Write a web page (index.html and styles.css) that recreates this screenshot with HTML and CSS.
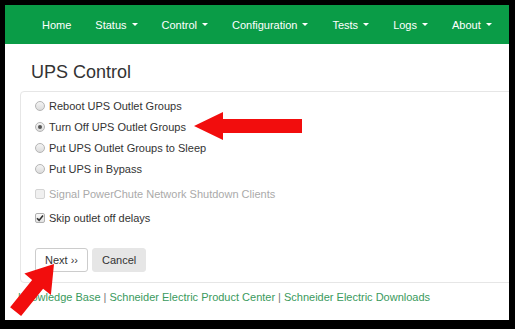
FILE: index.html
```html
<!DOCTYPE html>
<html lang="en">
<head>
  <meta charset="UTF-8" />
  <meta name="viewport" content="width=device-width, initial-scale=1.0"/>
  <title>UPS Control</title>
  <link rel="stylesheet" href="styles.css">
</head>
<body>
  <div class="screen">
    <nav class="navbar">
      <a class="nav-link">Home</a>
      <a class="nav-link">Status<span class="caret"></span></a>
      <a class="nav-link">Control<span class="caret"></span></a>
      <a class="nav-link">Configuration<span class="caret"></span></a>
      <a class="nav-link">Tests<span class="caret"></span></a>
      <a class="nav-link">Logs<span class="caret"></span></a>
      <a class="nav-link">About<span class="caret"></span></a>
    </nav>
    <h1 class="page-title">UPS Control</h1>
    <div class="panel">
      <div class="option"><span class="radio"></span>Reboot UPS Outlet Groups</div>
      <div class="option"><span class="radio on"></span>Turn Off UPS Outlet Groups</div>
      <div class="option"><span class="radio"></span>Put UPS Outlet Groups to Sleep</div>
      <div class="option"><span class="radio"></span>Put UPS in Bypass</div>
      <div class="option check first disabled"><span class="box"></span>Signal PowerChute Network Shutdown Clients</div>
      <div class="option check"><span class="box">
        <svg width="8" height="8" viewBox="0 0 8 8"><path d="M1 4.2 L3.1 6.4 L7 1.4" fill="none" stroke="#333" stroke-width="1.6"/></svg>
      </span>Skip outlet off delays</div>
      <div class="buttons">
        <button class="btn btn-next">Next &rsaquo;&rsaquo;</button>
        <button class="btn btn-cancel">Cancel</button>
      </div>
    </div>
    <div class="footer">
      <a>Knowledge Base</a><span class="sep">|</span><a>Schneider Electric Product Center</a><span class="sep">|</span><a>Schneider Electric Downloads</a>
    </div>
  </div>
  <svg class="arrows" width="515" height="329" viewBox="0 0 515 329">
    <polygon points="194,126 223,112 223,119 302,119 302,133 223,133 223,140" fill="#f20d0d"/>
    <polygon points="54,264 24.4,273.6 32.1,279.9 10.1,307.2 21.1,316 43.1,288.7 50.9,295" fill="#f20d0d"/>
  </svg>
</body>
</html>
```

FILE: styles.css
```css
html, body {
  margin: 0;
  padding: 0;
}
body {
  position: relative;
  width: 515px;
  height: 329px;
  background-color: #000;
  font-family: "Liberation Sans", Arial, sans-serif;
  font-size: 11px;
  color: #333;
  overflow: hidden;
}
.screen {
  margin: 5px 0 0 5px;
  width: 504px;
  height: 315px;
  background-color: #fff;
  overflow: hidden;
}
.navbar {
  display: flex;
  align-items: center;
  height: 39px;
  padding-left: 25px;
  background-color: #0a9c47;
}
.nav-link {
  display: flex;
  align-items: center;
  padding: 0 12px;
  color: #fff;
  white-space: nowrap;
}
.caret {
  margin-left: 5px;
  border-top: 3px solid #fff;
  border-left: 3px solid transparent;
  border-right: 3px solid transparent;
}
.page-title {
  margin: 17px 0 0 26px;
  font-size: 18px;
  font-weight: normal;
  line-height: 22px;
  color: #333;
}
.panel {
  width: 520px;
  margin: 8px 0 0 15px;
  padding: 3px 0 10px 14px;
  border: 1px solid #e6e6e6;
  border-radius: 4px;
}
.option {
  display: flex;
  align-items: center;
  height: 21px;
}
.check {
  margin-top: 3px;
}
.check.first {
  margin-top: 4px;
}
.disabled {
  color: #aaa;
}
.radio {
  box-sizing: border-box;
  display: flex;
  align-items: center;
  justify-content: center;
  width: 10px;
  height: 10px;
  margin-right: 4px;
  border: 1px solid #b4b4b4;
  border-radius: 50%;
  background: linear-gradient(#f4f4f4, #dcdcdc);
}
.radio.on::after {
  content: "";
  width: 4px;
  height: 4px;
  border-radius: 50%;
  background-color: #555;
}
.box {
  box-sizing: border-box;
  display: flex;
  align-items: center;
  justify-content: center;
  width: 10px;
  height: 10px;
  margin-right: 4px;
  border: 1px solid #b0b0b0;
  border-radius: 2px;
  background: linear-gradient(#fafafa, #e2e2e2);
}
.disabled .box {
  border-color: #d4d4d4;
  background: #f0f0f0;
}
.buttons {
  display: flex;
  gap: 4px;
  margin-top: 20px;
}
.btn {
  height: 24px;
  padding: 0 9px;
  border: 1px solid #ccc;
  border-radius: 3px;
  font-family: inherit;
  font-size: 11px;
  color: #333;
  background-color: #fff;
}
.btn-cancel {
  border-color: #e6e6e6;
  background-color: #e6e6e6;
}
.footer {
  padding: 7px 0 0 13px;
  line-height: 14px;
  white-space: nowrap;
}
.footer a {
  color: #3a9a5d;
}
.sep {
  margin: 0 3px;
  color: #777;
}
.arrows {
  position: absolute;
  top: 0;
  left: 0;
}
```
